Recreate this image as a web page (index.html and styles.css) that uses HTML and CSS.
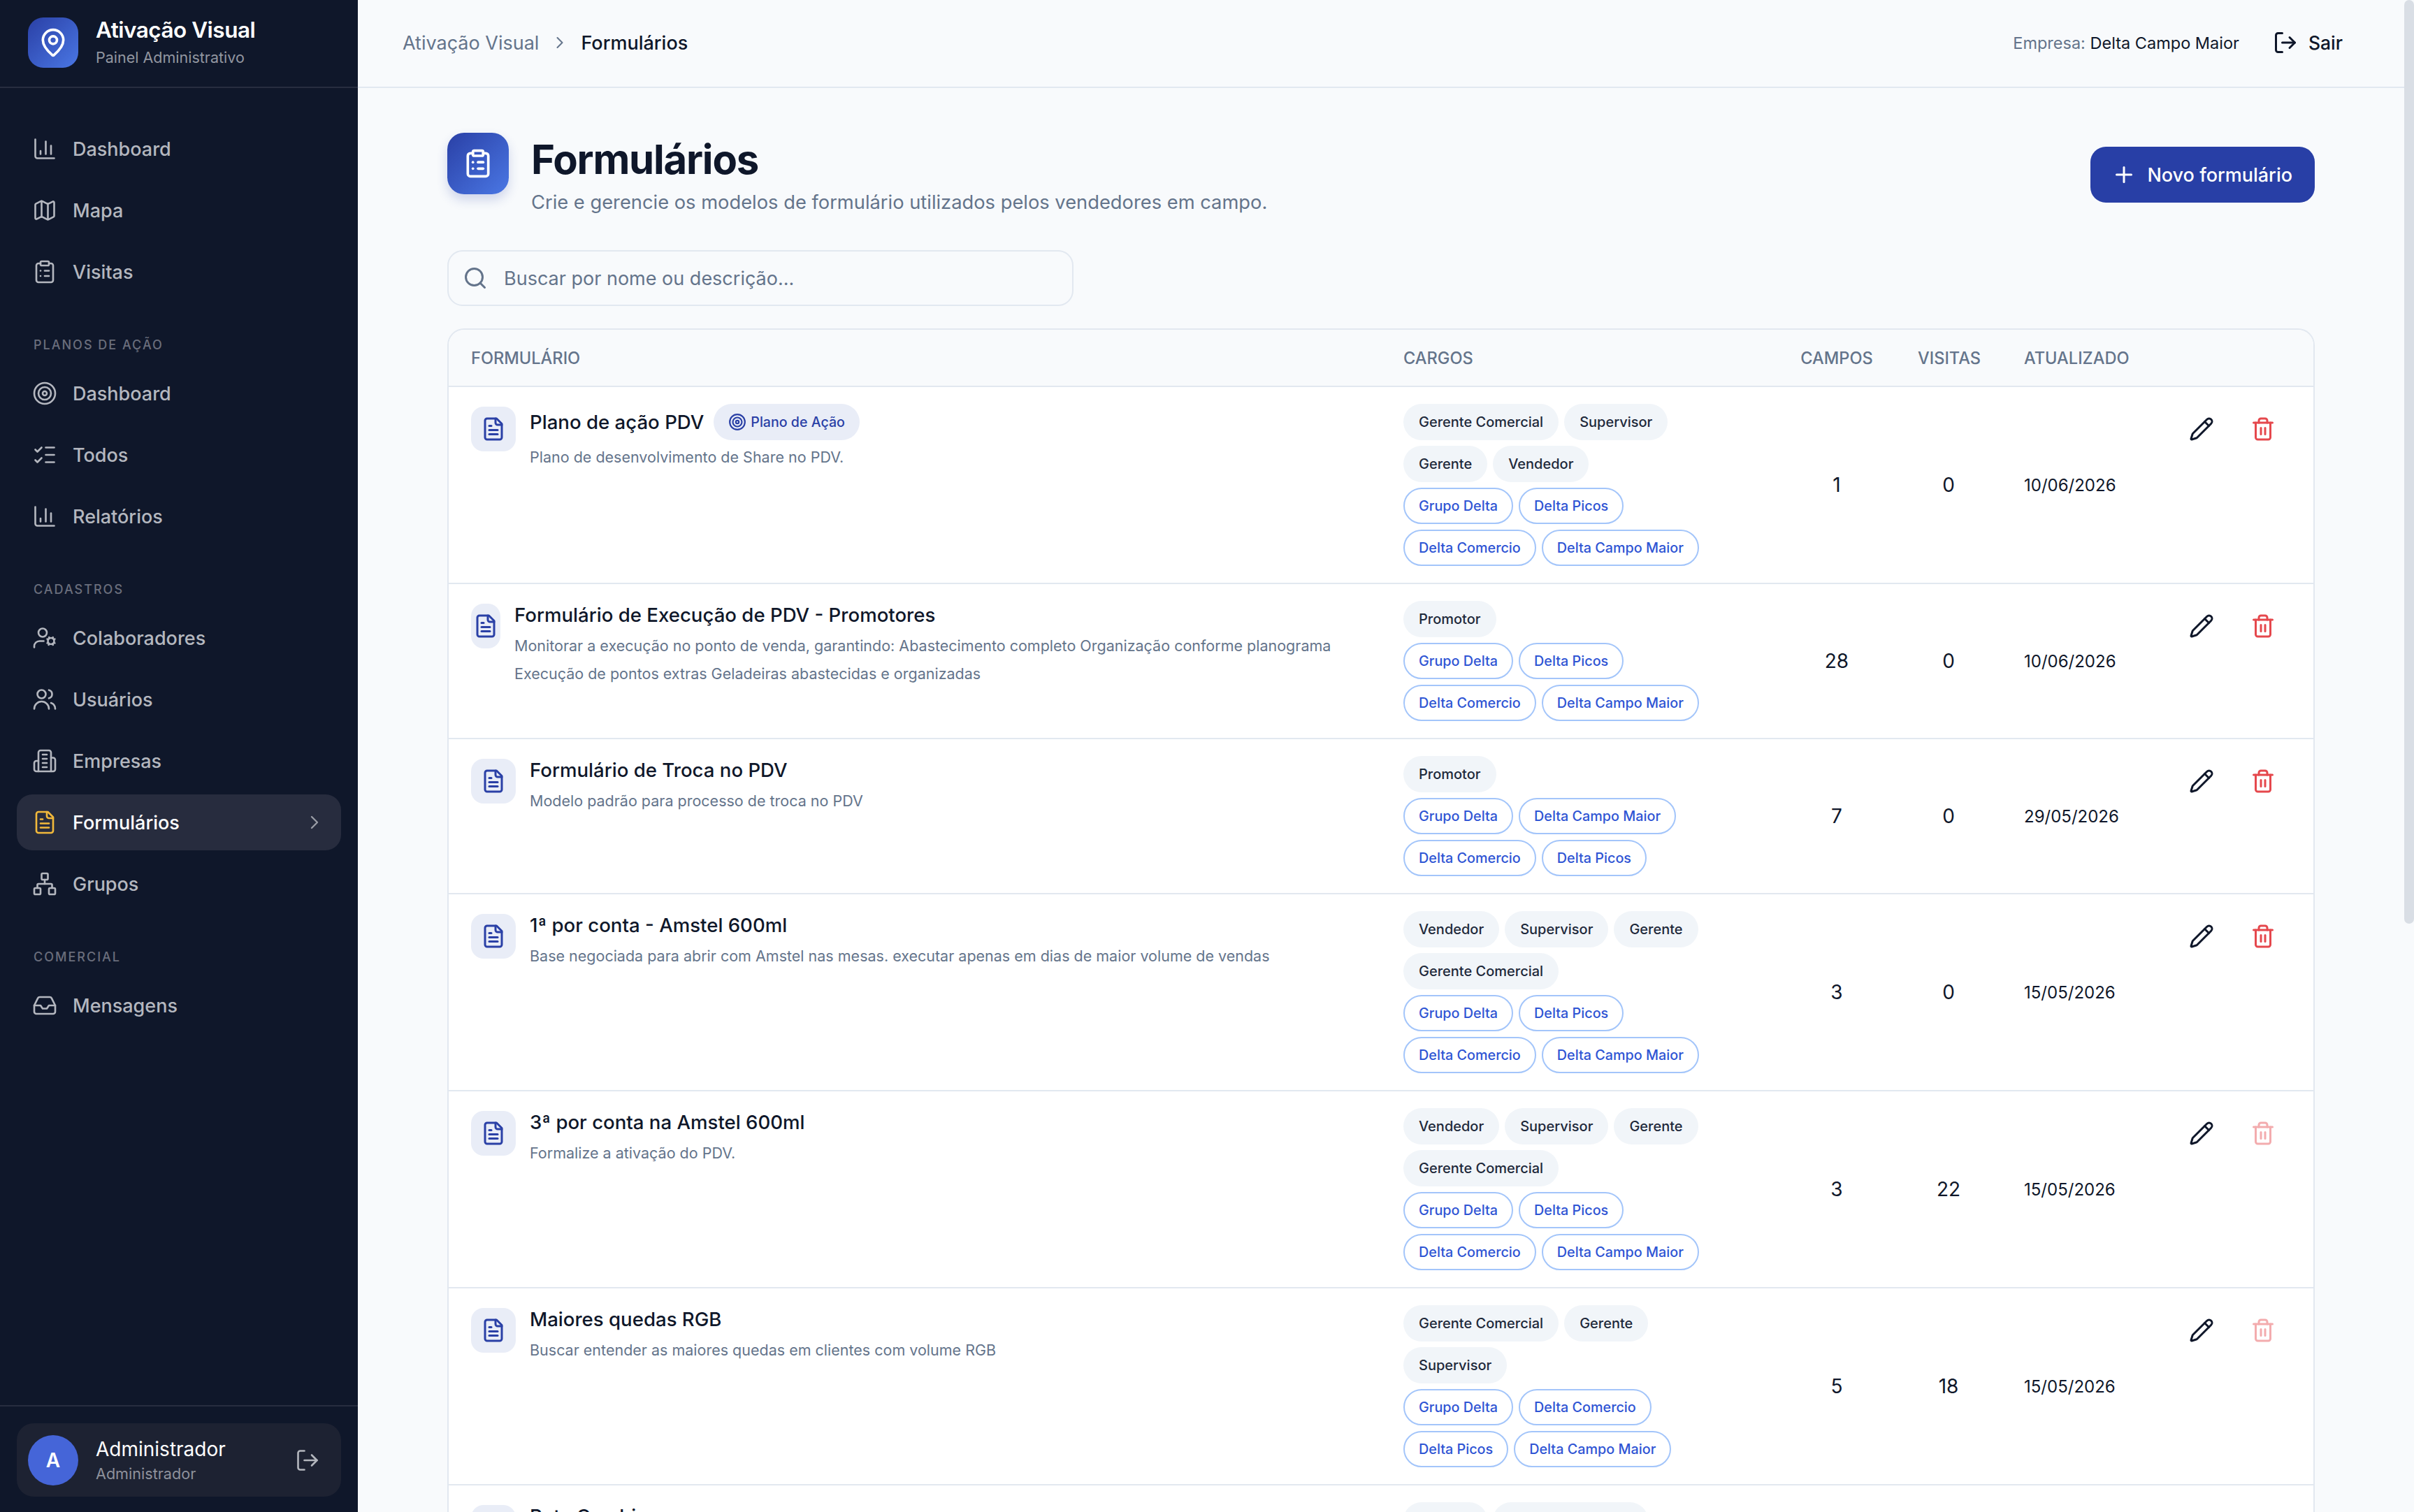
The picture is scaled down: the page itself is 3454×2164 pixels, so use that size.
FILE: index.html
```html
<!DOCTYPE html>
<html lang="pt-BR">
<head>
    <meta charset="UTF-8">
    <title>Formulários - Ativação Visual</title>
    <link rel="stylesheet" href="styles.css">
</head>
<body>
    <svg class="sprites" width="0" height="0" aria-hidden="true">
        <symbol id="i-chart" viewBox="0 0 24 24"><path d="M3 3v16a2 2 0 0 0 2 2h16"/><path d="M18 17V9"/><path d="M13 17V5"/><path d="M8 17v-3"/></symbol>
        <symbol id="i-map" viewBox="0 0 24 24"><path d="M14.106 5.553a2 2 0 0 0 1.788 0l3.659-1.83A1 1 0 0 1 21 4.619v12.764a1 1 0 0 1-.553.894l-4.553 2.277a2 2 0 0 1-1.788 0l-4.212-2.106a2 2 0 0 0-1.788 0l-3.659 1.83A1 1 0 0 1 3 19.381V6.618a1 1 0 0 1 .553-.894l4.553-2.277a2 2 0 0 1 1.788 0z"/><path d="M15 5.764v15"/><path d="M9 3.236v15"/></symbol>
        <symbol id="i-clipboard" viewBox="0 0 24 24"><rect width="8" height="4" x="8" y="2" rx="1" ry="1"/><path d="M16 4h2a2 2 0 0 1 2 2v14a2 2 0 0 1-2 2H6a2 2 0 0 1-2-2V6a2 2 0 0 1 2-2h2"/><path d="M12 11h4"/><path d="M12 16h4"/><path d="M8 11h.01"/><path d="M8 16h.01"/></symbol>
        <symbol id="i-target" viewBox="0 0 24 24"><circle cx="12" cy="12" r="10"/><circle cx="12" cy="12" r="6"/><circle cx="12" cy="12" r="2"/></symbol>
        <symbol id="i-checks" viewBox="0 0 24 24"><path d="M13 5h8"/><path d="M13 12h8"/><path d="M13 19h8"/><path d="m3 17 2 2 4-4"/><path d="m3 7 2 2 4-4"/></symbol>
        <symbol id="i-usercog" viewBox="0 0 24 24"><circle cx="10" cy="7" r="4"/><path d="M2 21v-1a5 5 0 0 1 5-5h4"/><circle cx="18" cy="15" r="3"/><path d="m19.5 12.4.4-1"/><path d="m16.1 17.6-.4 1"/><path d="m20.6 16.5 1 .4"/><path d="m15.4 13.5-1-.4"/><path d="m20.6 13.5 1-.4"/><path d="m15.4 16.5-1 .4"/><path d="m16.5 12.4-.4-1"/><path d="m19.5 17.6.4 1"/></symbol>
        <symbol id="i-users" viewBox="0 0 24 24"><path d="M16 21a7 7 0 0 0-14 0"/><circle cx="9" cy="7" r="4"/><path d="M22 21a6 6 0 0 0-4-5.6"/><path d="M16 3.13a4 4 0 0 1 0 7.75"/></symbol>
        <symbol id="i-building" viewBox="0 0 24 24"><path d="M6 22V4a2 2 0 0 1 2-2h8a2 2 0 0 1 2 2v18Z"/><path d="M6 12H4a2 2 0 0 0-2 2v6a2 2 0 0 0 2 2h2"/><path d="M18 9h2a2 2 0 0 1 2 2v9a2 2 0 0 1-2 2h-2"/><path d="M10 6h4"/><path d="M10 10h4"/><path d="M10 14h4"/><path d="M10 18h4"/></symbol>
        <symbol id="i-file" viewBox="0 0 24 24"><path d="M15 2H6a2 2 0 0 0-2 2v16a2 2 0 0 0 2 2h12a2 2 0 0 0 2-2V7Z"/><path d="M14 2v4a2 2 0 0 0 2 2h4"/><path d="M10 9H8"/><path d="M16 13H8"/><path d="M16 17H8"/></symbol>
        <symbol id="i-network" viewBox="0 0 24 24"><rect x="16" y="16" width="6" height="6" rx="1"/><rect x="2" y="16" width="6" height="6" rx="1"/><rect x="9" y="2" width="6" height="6" rx="1"/><path d="M5 16v-3a1 1 0 0 1 1-1h12a1 1 0 0 1 1 1v3"/><path d="M12 12V8"/></symbol>
        <symbol id="i-inbox" viewBox="0 0 24 24"><path d="M22 12h-6l-2 3h-4l-2-3H2"/><path d="M5.45 5.11 2 12v6a2 2 0 0 0 2 2h16a2 2 0 0 0 2-2v-6l-3.45-6.89A2 2 0 0 0 16.76 4H7.24a2 2 0 0 0-1.79 1.11z"/></symbol>
        <symbol id="i-chevron" viewBox="0 0 24 24"><path d="m9 18 6-6-6-6"/></symbol>
        <symbol id="i-logout" viewBox="0 0 24 24"><path d="M9 21H5a2 2 0 0 1-2-2V5a2 2 0 0 1 2-2h4"/><path d="m16 17 5-5-5-5"/><path d="M21 12H9"/></symbol>
        <symbol id="i-pin" viewBox="0 0 24 24"><path d="M20 10c0 4.993-5.539 10.193-7.399 11.799a1 1 0 0 1-1.202 0C9.539 20.193 4 14.993 4 10a8 8 0 0 1 16 0"/><circle cx="12" cy="10" r="3"/></symbol>
        <symbol id="i-plus" viewBox="0 0 24 24"><path d="M5 12h14"/><path d="M12 5v14"/></symbol>
        <symbol id="i-search" viewBox="0 0 24 24"><path d="m21 21-4.34-4.34"/><circle cx="11" cy="11" r="8"/></symbol>
        <symbol id="i-pencil" viewBox="0 0 24 24"><path d="M21.174 6.812a1 1 0 0 0-3.986-3.987L3.842 16.174a2 2 0 0 0-.5.83l-1.321 4.352a.5.5 0 0 0 .623.622l4.353-1.32a2 2 0 0 0 .83-.497z"/><path d="m15 5 4 4"/></symbol>
        <symbol id="i-trash" viewBox="0 0 24 24"><path d="M10 11v6"/><path d="M14 11v6"/><path d="M19 6v14a2 2 0 0 1-2 2H7a2 2 0 0 1-2-2V6"/><path d="M3 6h18"/><path d="M8 6V4a2 2 0 0 1 2-2h4a2 2 0 0 1 2 2v2"/></symbol>
    </svg>

    <div class="app">
        <aside class="sidebar">
            <div class="brand">
                <div class="brand-logo"><svg class="icon"><use href="#i-pin"/></svg></div>
                <div class="brand-text">
                    <div class="brand-name">Ativação Visual</div>
                    <div class="brand-sub">Painel Administrativo</div>
                </div>
            </div>

            <nav class="nav">
                <a class="nav-item"><svg class="icon"><use href="#i-chart"/></svg>Dashboard</a>
                <a class="nav-item"><svg class="icon"><use href="#i-map"/></svg>Mapa</a>
                <a class="nav-item"><svg class="icon"><use href="#i-clipboard"/></svg>Visitas</a>

                <div class="nav-label">Planos de ação</div>
                <a class="nav-item"><svg class="icon"><use href="#i-target"/></svg>Dashboard</a>
                <a class="nav-item"><svg class="icon"><use href="#i-checks"/></svg>Todos</a>
                <a class="nav-item"><svg class="icon"><use href="#i-chart"/></svg>Relatórios</a>

                <div class="nav-label">Cadastros</div>
                <a class="nav-item"><svg class="icon"><use href="#i-usercog"/></svg>Colaboradores</a>
                <a class="nav-item"><svg class="icon"><use href="#i-users"/></svg>Usuários</a>
                <a class="nav-item"><svg class="icon"><use href="#i-building"/></svg>Empresas</a>
                <a class="nav-item active"><svg class="icon"><use href="#i-file"/></svg>Formulários<svg class="icon nav-chevron"><use href="#i-chevron"/></svg></a>
                <a class="nav-item"><svg class="icon"><use href="#i-network"/></svg>Grupos</a>

                <div class="nav-label">Comercial</div>
                <a class="nav-item"><svg class="icon"><use href="#i-inbox"/></svg>Mensagens</a>
            </nav>

            <div class="side-footer">
                <div class="user-card">
                    <div class="avatar">A</div>
                    <div class="user-info">
                        <div class="user-name">Administrador</div>
                        <div class="user-role">Administrador</div>
                    </div>
                    <svg class="icon user-logout"><use href="#i-logout"/></svg>
                </div>
            </div>
        </aside>

        <div class="main">
            <header class="topbar">
                <div class="crumbs">
                    <span class="crumb-root">Ativação Visual</span>
                    <svg class="icon crumb-sep"><use href="#i-chevron"/></svg>
                    <span class="crumb-page">Formulários</span>
                </div>
                <div class="top-right">
                    <div class="company"><span>Empresa:</span> Delta Campo Maior</div>
                    <a class="exit"><svg class="icon"><use href="#i-logout"/></svg>Sair</a>
                </div>
            </header>

            <main class="content">
                <div class="page-head">
                    <div class="page-icon"><svg class="icon"><use href="#i-clipboard"/></svg></div>
                    <div class="page-titles">
                        <h1>Formulários</h1>
                        <p>Crie e gerencie os modelos de formulário utilizados pelos vendedores em campo.</p>
                    </div>
                    <button class="btn-new"><svg class="icon"><use href="#i-plus"/></svg>Novo formulário</button>
                </div>

                <div class="search">
                    <svg class="icon"><use href="#i-search"/></svg>
                    <span>Buscar por nome ou descrição...</span>
                </div>

                <div class="card">
                    <table class="forms">
                        <colgroup>
                            <col class="c-form"><col class="c-roles"><col class="c-fields"><col class="c-visits"><col class="c-date"><col class="c-actions">
                        </colgroup>
                        <thead>
                            <tr>
                                <th>Formulário</th>
                                <th>Cargos</th>
                                <th class="center">Campos</th>
                                <th class="center">Visitas</th>
                                <th>Atualizado</th>
                                <th></th>
                            </tr>
                        </thead>
                        <tbody>
                            <tr>
                                <td>
                                    <div class="form-cell">
                                        <div class="doc-icon"><svg class="icon"><use href="#i-file"/></svg></div>
                                        <div>
                                            <div class="form-title">Plano de ação PDV <span class="badge"><svg class="icon"><use href="#i-target"/></svg>Plano de Ação</span></div>
                                            <div class="form-desc">Plano de desenvolvimento de Share no PDV.</div>
                                        </div>
                                    </div>
                                </td>
                                <td>
                                    <div class="chips"><span class="chip">Gerente Comercial</span><span class="chip">Supervisor</span><span class="chip">Gerente</span><span class="chip">Vendedor</span></div>
                                    <div class="chips"><span class="chip out">Grupo Delta</span><span class="chip out">Delta Picos</span><span class="chip out">Delta Comercio</span><span class="chip out">Delta Campo Maior</span></div>
                                </td>
                                <td class="num">1</td>
                                <td class="num">0</td>
                                <td class="date">10/06/2026</td>
                                <td class="actions"><div class="act-row"><button class="act"><svg class="icon"><use href="#i-pencil"/></svg></button><button class="act del"><svg class="icon"><use href="#i-trash"/></svg></button></div></td>
                            </tr>
                            <tr>
                                <td>
                                    <div class="form-cell">
                                        <div class="doc-icon"><svg class="icon"><use href="#i-file"/></svg></div>
                                        <div>
                                            <div class="form-title">Formulário de Execução de PDV - Promotores</div>
                                            <div class="form-desc">Monitorar a execução no ponto de venda, garantindo: Abastecimento completo Organização conforme planograma Execução de pontos extras Geladeiras abastecidas e organizadas</div>
                                        </div>
                                    </div>
                                </td>
                                <td>
                                    <div class="chips"><span class="chip">Promotor</span></div>
                                    <div class="chips"><span class="chip out">Grupo Delta</span><span class="chip out">Delta Picos</span><span class="chip out">Delta Comercio</span><span class="chip out">Delta Campo Maior</span></div>
                                </td>
                                <td class="num">28</td>
                                <td class="num">0</td>
                                <td class="date">10/06/2026</td>
                                <td class="actions"><div class="act-row"><button class="act"><svg class="icon"><use href="#i-pencil"/></svg></button><button class="act del"><svg class="icon"><use href="#i-trash"/></svg></button></div></td>
                            </tr>
                            <tr>
                                <td>
                                    <div class="form-cell">
                                        <div class="doc-icon"><svg class="icon"><use href="#i-file"/></svg></div>
                                        <div>
                                            <div class="form-title">Formulário de Troca no PDV</div>
                                            <div class="form-desc">Modelo padrão para processo de troca no PDV</div>
                                        </div>
                                    </div>
                                </td>
                                <td>
                                    <div class="chips"><span class="chip">Promotor</span></div>
                                    <div class="chips"><span class="chip out">Grupo Delta</span><span class="chip out">Delta Campo Maior</span><span class="chip out">Delta Comercio</span><span class="chip out">Delta Picos</span></div>
                                </td>
                                <td class="num">7</td>
                                <td class="num">0</td>
                                <td class="date">29/05/2026</td>
                                <td class="actions"><div class="act-row"><button class="act"><svg class="icon"><use href="#i-pencil"/></svg></button><button class="act del"><svg class="icon"><use href="#i-trash"/></svg></button></div></td>
                            </tr>
                            <tr>
                                <td>
                                    <div class="form-cell">
                                        <div class="doc-icon"><svg class="icon"><use href="#i-file"/></svg></div>
                                        <div>
                                            <div class="form-title">1ª por conta - Amstel 600ml</div>
                                            <div class="form-desc">Base negociada para abrir com Amstel nas mesas. executar apenas em dias de maior volume de vendas</div>
                                        </div>
                                    </div>
                                </td>
                                <td>
                                    <div class="chips"><span class="chip">Vendedor</span><span class="chip">Supervisor</span><span class="chip">Gerente</span><span class="chip">Gerente Comercial</span></div>
                                    <div class="chips"><span class="chip out">Grupo Delta</span><span class="chip out">Delta Picos</span><span class="chip out">Delta Comercio</span><span class="chip out">Delta Campo Maior</span></div>
                                </td>
                                <td class="num">3</td>
                                <td class="num">0</td>
                                <td class="date">15/05/2026</td>
                                <td class="actions"><div class="act-row"><button class="act"><svg class="icon"><use href="#i-pencil"/></svg></button><button class="act del"><svg class="icon"><use href="#i-trash"/></svg></button></div></td>
                            </tr>
                            <tr>
                                <td>
                                    <div class="form-cell">
                                        <div class="doc-icon"><svg class="icon"><use href="#i-file"/></svg></div>
                                        <div>
                                            <div class="form-title">3ª por conta na Amstel 600ml</div>
                                            <div class="form-desc">Formalize a ativação do PDV.</div>
                                        </div>
                                    </div>
                                </td>
                                <td>
                                    <div class="chips"><span class="chip">Vendedor</span><span class="chip">Supervisor</span><span class="chip">Gerente</span><span class="chip">Gerente Comercial</span></div>
                                    <div class="chips"><span class="chip out">Grupo Delta</span><span class="chip out">Delta Picos</span><span class="chip out">Delta Comercio</span><span class="chip out">Delta Campo Maior</span></div>
                                </td>
                                <td class="num">3</td>
                                <td class="num">22</td>
                                <td class="date">15/05/2026</td>
                                <td class="actions"><div class="act-row"><button class="act"><svg class="icon"><use href="#i-pencil"/></svg></button><button class="act del off"><svg class="icon"><use href="#i-trash"/></svg></button></div></td>
                            </tr>
                            <tr>
                                <td>
                                    <div class="form-cell">
                                        <div class="doc-icon"><svg class="icon"><use href="#i-file"/></svg></div>
                                        <div>
                                            <div class="form-title">Maiores quedas RGB</div>
                                            <div class="form-desc">Buscar entender as maiores quedas em clientes com volume RGB</div>
                                        </div>
                                    </div>
                                </td>
                                <td>
                                    <div class="chips"><span class="chip">Gerente Comercial</span><span class="chip">Gerente</span><span class="chip">Supervisor</span></div>
                                    <div class="chips"><span class="chip out">Grupo Delta</span><span class="chip out">Delta Comercio</span><span class="chip out">Delta Picos</span><span class="chip out">Delta Campo Maior</span></div>
                                </td>
                                <td class="num">5</td>
                                <td class="num">18</td>
                                <td class="date">15/05/2026</td>
                                <td class="actions"><div class="act-row"><button class="act"><svg class="icon"><use href="#i-pencil"/></svg></button><button class="act del off"><svg class="icon"><use href="#i-trash"/></svg></button></div></td>
                            </tr>
                            <tr>
                                <td>
                                    <div class="form-cell">
                                        <div class="doc-icon"><svg class="icon"><use href="#i-file"/></svg></div>
                                        <div>
                                            <div class="form-title">Rota Combi</div>
                                        </div>
                                    </div>
                                </td>
                                <td>
                                    <div class="chips"><span class="chip">Gerente</span><span class="chip">Gerente Comercial</span></div>
                                </td>
                                <td class="num"></td>
                                <td class="num"></td>
                                <td class="date"></td>
                                <td class="actions"></td>
                            </tr>
                        </tbody>
                    </table>
                </div>
            </main>
        </div>

        <div class="scrollbar"><div class="scroll-thumb"></div></div>
    </div>
</body>
</html>
```

FILE: styles.css
```css
/* Reset */
* {
    box-sizing: border-box;
    margin: 0;
    padding: 0;
}

html, body {
    height: 100%;
    overflow: hidden;
}

body {
    background-color: #f8fafc;
    color: #0f172a;
    font-family: 'Inter', 'Noto Sans', sans-serif;
    font-size: 28px;
}

.sprites {
    position: absolute;
}

.icon {
    width: 36px;
    height: 36px;
    flex: none;
    fill: none;
    stroke: currentColor;
    stroke-width: 2;
    stroke-linecap: round;
    stroke-linejoin: round;
}

.app {
    display: flex;
    height: 2164px;
}

/* Sidebar */
.sidebar {
    width: 512px;
    flex: none;
    display: flex;
    flex-direction: column;
    background-color: #0f172a;
    color: #fff;
}

.brand {
    height: 126px;
    flex: none;
    display: flex;
    align-items: center;
    gap: 25px;
    padding: 0 40px 2px;
    border-bottom: 2px solid #272d3f;
}

.brand-logo {
    width: 72px;
    height: 72px;
    flex: none;
    display: flex;
    align-items: center;
    justify-content: center;
    border-radius: 22px;
    background: linear-gradient(135deg, #2a40a6, #4a77e4);
}

.brand-logo .icon {
    width: 44px;
    height: 44px;
}

.brand-text {
    padding-bottom: 2px;
}

.brand-name {
    font-size: 31.5px;
    font-weight: 600;
    line-height: 40px;
    letter-spacing: -0.5px;
}

.brand-sub {
    margin-top: 3px;
    font-size: 21.5px;
    line-height: 32px;
    color: #9296a0;
}

.nav {
    flex: 1;
    padding: 47px 24px 0;
}

.nav-item {
    display: flex;
    align-items: center;
    height: 80px;
    margin-bottom: 8px;
    padding: 0 22px;
    gap: 22px;
    border-radius: 22px;
    font-size: 27px;
    font-weight: 500;
    color: #b4b7bf;
}

.nav-item .icon {
    stroke-width: 1.75;
}

.nav-item.active {
    background-color: #272c3e;
    color: #fff;
}

.nav-item.active .icon {
    color: #f2b93b;
}

.nav-item.active .nav-chevron {
    width: 32px;
    height: 32px;
    margin-left: auto;
    color: #9a9da6;
}

.nav-label {
    height: 30px;
    margin: 50px 0 14px;
    padding-left: 24px;
    font-size: 18px;
    font-weight: 500;
    line-height: 30px;
    letter-spacing: 2px;
    text-transform: uppercase;
    color: #6a6e7c;
}

.side-footer {
    flex: none;
    height: 153px;
    padding: 24px;
    border-top: 2px solid #272d3f;
}

.user-card {
    display: flex;
    align-items: center;
    gap: 25px;
    height: 105px;
    padding: 0 16px;
    border-radius: 24px;
    background-color: #1d2232;
}

.avatar {
    width: 72px;
    height: 72px;
    flex: none;
    display: flex;
    align-items: center;
    justify-content: center;
    border-radius: 50%;
    background-color: #4565d8;
    font-weight: 600;
}

.user-info {
    flex: 1;
}

.user-name {
    font-size: 28px;
    line-height: 38px;
}

.user-role {
    font-size: 21.6px;
    line-height: 32px;
    color: #8e919b;
}

.user-logout {
    color: #b3b6bd;
    margin-right: 14px;
    stroke-width: 1.75;
}

/* Area principal */
.main {
    flex: 1;
    min-width: 0;
    display: flex;
    flex-direction: column;
}

.topbar {
    height: 126px;
    flex: none;
    display: flex;
    align-items: center;
    justify-content: space-between;
    padding: 0 88px 2px 64px;
    border-bottom: 2px solid #e2e8f0;
}

.crumbs {
    display: flex;
    align-items: center;
    gap: 16px;
    font-size: 27px;
}

.crumb-root {
    color: #64748b;
}

.crumb-sep {
    width: 28px;
    height: 28px;
    color: #64748b;
    stroke-width: 1.75;
}

.crumb-page {
    font-weight: 500;
}

.top-right {
    display: flex;
    align-items: center;
    gap: 48px;
}

.company {
    font-size: 23.5px;
}

.company span {
    color: #64748b;
}

.exit {
    display: flex;
    align-items: center;
    gap: 15px;
    font-size: 26.5px;
    font-weight: 500;
}

.content {
    flex: 1;
    padding: 64px 128px 0;
}

.page-head {
    display: flex;
    align-items: flex-start;
    gap: 32px;
}

.page-icon {
    width: 88px;
    height: 88px;
    flex: none;
    display: flex;
    align-items: center;
    justify-content: center;
    border-radius: 24px;
    background: linear-gradient(135deg, #2a40a6, #4a77e4);
    box-shadow: 0 8px 16px rgba(42, 64, 166, 0.2);
    color: #fff;
}

.page-icon .icon {
    width: 44px;
    height: 44px;
}

.page-titles {
    flex: 1;
}

h1 {
    margin-top: 2px;
    font-size: 58px;
    font-weight: 700;
    line-height: 72px;
    letter-spacing: -1.2px;
}

.page-titles p {
    margin-top: 6px;
    font-size: 27.3px;
    line-height: 40px;
    color: #64748b;
}

.btn-new {
    display: flex;
    align-items: center;
    align-self: center;
    gap: 15px;
    height: 80px;
    padding: 0 32px 0 30px;
    border: none;
    border-radius: 22px;
    background-color: #283fa6;
    color: #fff;
    font-family: inherit;
    font-size: 27px;
    font-weight: 500;
}

.search {
    display: flex;
    align-items: center;
    gap: 23px;
    width: 896px;
    height: 80px;
    margin-top: 48px;
    padding: 0 20px;
    border: 2px solid #e2e8f0;
    border-radius: 22px;
    font-size: 27px;
    color: #64748b;
}

/* Tabela */
.card {
    margin-top: 32px;
    border: 2px solid #e2e8f0;
    border-bottom: none;
    border-radius: 24px 24px 0 0;
    background-color: #fff;
    overflow: hidden;
}

.forms {
    width: 100%;
    table-layout: fixed;
    border-collapse: collapse;
}

.c-form { width: 1334px; }
.c-roles { width: 568px; }
.c-fields { width: 168px; }
.c-visits { width: 152px; }
.c-date { width: 212px; }
.c-actions { width: 234px; }

th {
    height: 81px;
    padding: 0 32px;
    background-color: #f8fafc;
    border-bottom: 2px solid #e2e8f0;
    text-align: left;
    font-size: 23.6px;
    font-weight: 500;
    text-transform: uppercase;
    color: #64748b;
}

th.center {
    text-align: center;
}

td {
    padding: 24px 32px;
    border-bottom: 2px solid #e2e8f0;
    vertical-align: top;
}

.form-cell {
    display: flex;
    gap: 20px;
}

.doc-icon {
    width: 64px;
    height: 64px;
    margin-top: 4px;
    display: flex;
    align-items: center;
    justify-content: center;
    border-radius: 18px;
    background-color: #e9edf7;
    color: #2a40a6;
}

.form-title {
    display: flex;
    align-items: center;
    gap: 14px;
    min-height: 40px;
    font-size: 27.6px;
    font-weight: 500;
    line-height: 40px;
}

.badge {
    display: inline-flex;
    align-items: center;
    gap: 6px;
    height: 52px;
    padding: 0 21px;
    border-radius: 26px;
    background-color: #e9edf7;
    color: #2a40a6;
    font-size: 19.6px;
}

.badge .icon {
    width: 26px;
    height: 26px;
}

.form-desc {
    margin-top: 4px;
    font-size: 21.5px;
    line-height: 40px;
    color: #64748b;
}

.chips {
    display: flex;
    flex-wrap: wrap;
    gap: 8px;
    margin-bottom: 8px;
}

.chips:last-child {
    margin-bottom: 0;
}

.chip {
    display: inline-flex;
    align-items: center;
    height: 52px;
    padding: 0 22px;
    border-radius: 26px;
    background-color: #f1f5f9;
    font-size: 20px;
    font-weight: 500;
    color: #1e293b;
}

.chip.out {
    padding: 0 20px;
    border: 2px solid #a3c5fa;
    background-color: #fff;
    color: #2f55d4;
    font-size: 19.8px;
}

.num {
    text-align: center;
    vertical-align: middle;
    font-size: 28px;
}

.date {
    vertical-align: middle;
    font-size: 24px;
}

.actions {
    padding-right: 36px;
}

.act-row {
    display: flex;
    justify-content: flex-end;
    gap: 16px;
}

.act {
    display: flex;
    align-items: center;
    justify-content: center;
    width: 72px;
    height: 72px;
    border: none;
    background: none;
    color: #0f172a;
}

.act.del {
    color: #e5484d;
}

.act.off {
    opacity: 0.45;
}

/* Barra de rolagem */
.scrollbar {
    width: 14px;
    flex: none;
    background-color: #f8fafc;
}

.scroll-thumb {
    height: 1322px;
    border-radius: 7px;
    background-color: #d9dee5;
}
```
